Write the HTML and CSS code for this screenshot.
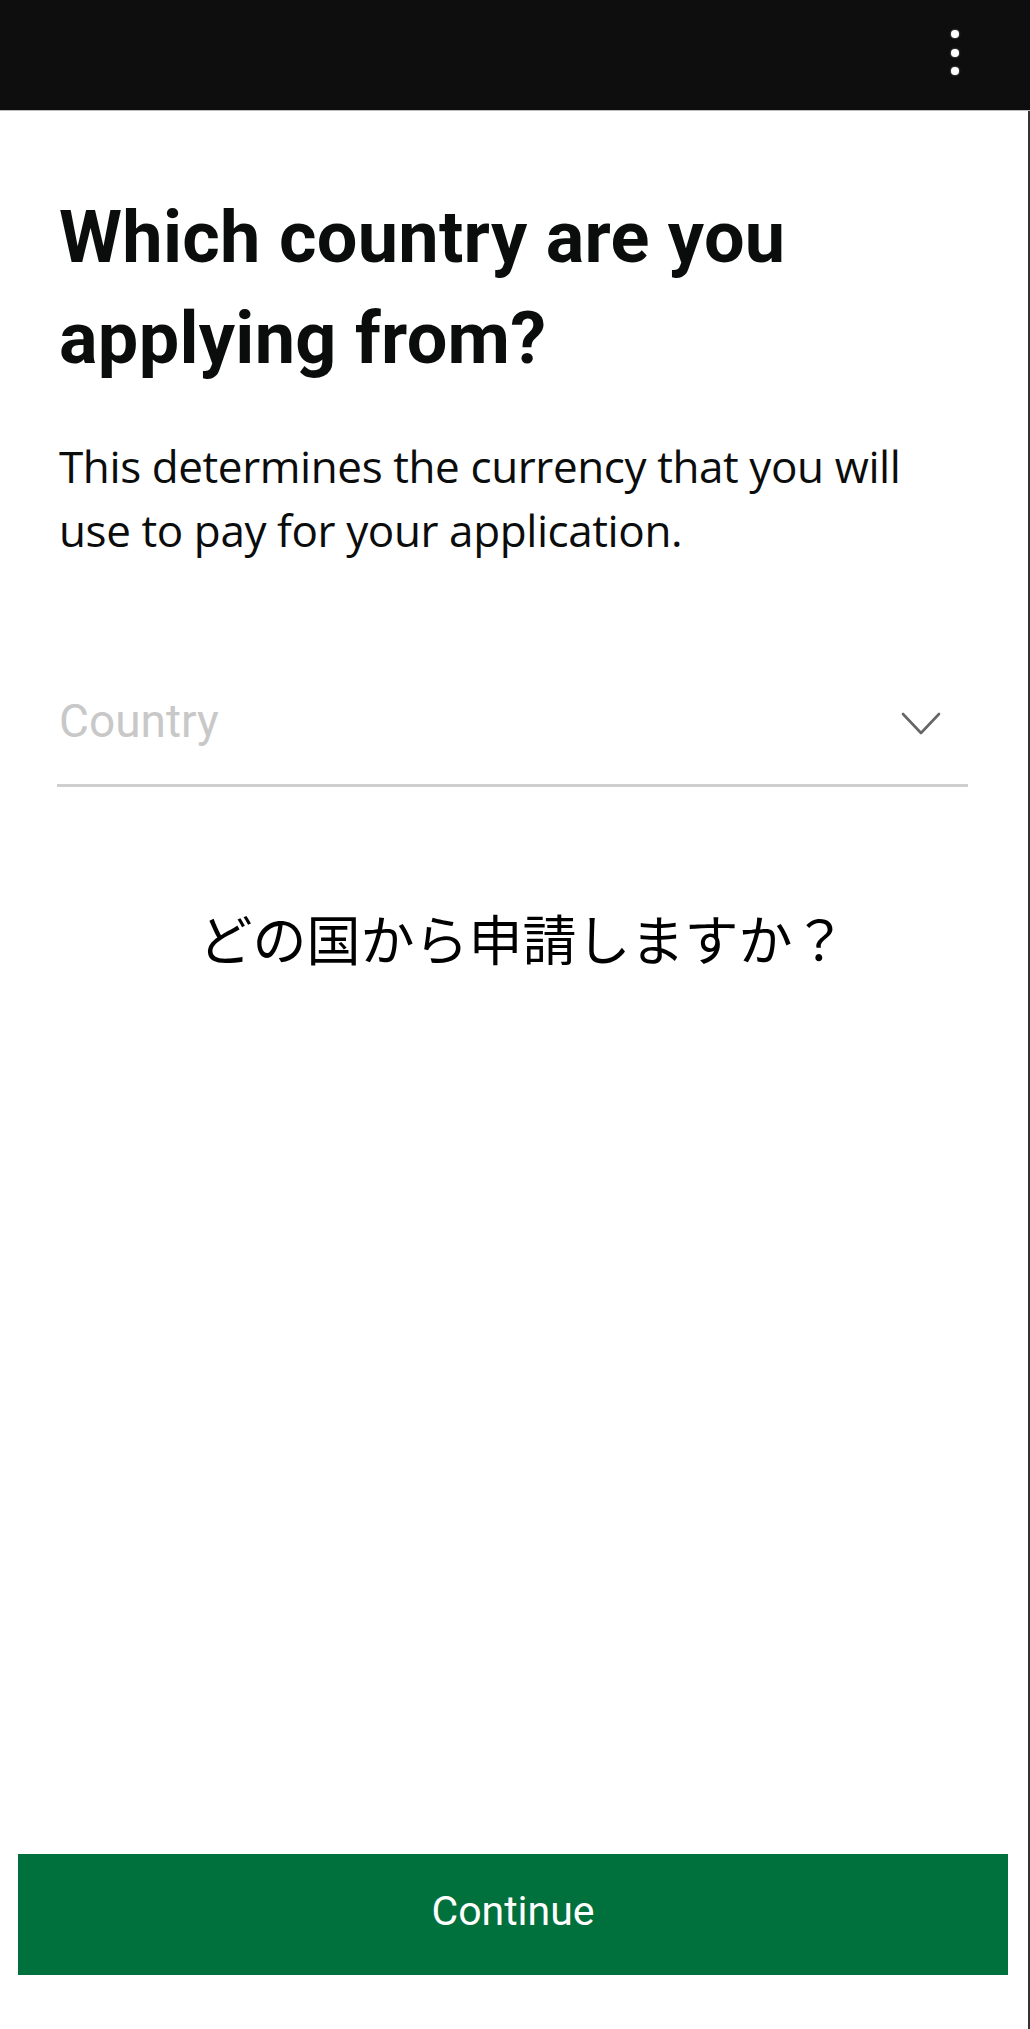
FILE: index.html
```html
<!DOCTYPE html>
<html lang="en">
<head>
    <meta charset="UTF-8">
    <meta name="viewport" content="width=device-width, initial-scale=1.0">
    <title>Which country are you applying from?</title>
    <link rel="stylesheet" href="styles.css">
</head>
<body>
    <header class="topbar">
        <button class="menu-btn" aria-label="More options">
            <span class="dot"></span>
            <span class="dot"></span>
            <span class="dot"></span>
        </button>
    </header>
    <div class="screen">
        <main class="content">
            <h1 class="title">Which country are you applying from?</h1>
            <p class="lead">This determines the currency that you will use to pay for your application.</p>
            <label class="country-field">
                <span class="placeholder">Country</span>
                <svg class="chevron" width="40" height="24" viewBox="0 0 40 24">
                    <path d="M2 2 L20 21 L38 2" fill="none" stroke="#666" stroke-width="2.6" stroke-linecap="round" stroke-linejoin="round"/>
                </svg>
            </label>
            <p class="translation">どの国から申請しますか？</p>
        </main>
        <div class="actions">
            <button class="continue-btn">Continue</button>
        </div>
    </div>
</body>
</html>
```

FILE: styles.css
```css
body {
    margin: 0;
    padding: 0;
    display: flex;
    flex-direction: column;
    min-height: 100vh;
    background-color: #fff;
    color: #0b0c0c;
}

.topbar {
    height: 110px;
    background-color: #0e0e0e;
    border-bottom: 1px solid #bdbdbd;
    display: flex;
    justify-content: flex-end;
    align-items: flex-start;
}

.menu-btn {
    margin: 30px 71px 0 0;
    padding: 0;
    border: none;
    background: none;
    display: flex;
    flex-direction: column;
    gap: 10.5px;
    cursor: pointer;
}

.dot {
    width: 8px;
    height: 8px;
    border-radius: 50%;
    background-color: #fff;
    box-shadow: 0 0 2px rgba(255, 255, 255, 0.6);
}

.screen {
    flex: 1;
    display: flex;
    flex-direction: column;
    border-right: 2px solid #333;
}

.content {
    padding: 76px 60px 0 59px;
}

.title {
    margin: 0;
    font-family: 'Roboto', sans-serif;
    font-size: 72px;
    font-weight: 700;
    line-height: 101px;
    letter-spacing: 0.3px;
}

.lead {
    margin: 45px 0 0;
    font-family: 'Open Sans', sans-serif;
    font-size: 44px;
    line-height: 64px;
    letter-spacing: -0.4px;
}

.country-field {
    margin: 132px 0 0 -2px;
    padding-bottom: 36px;
    border-bottom: 3px solid #cfcfcf;
    display: flex;
    justify-content: space-between;
    align-items: center;
}

.placeholder {
    font-family: 'Roboto', sans-serif;
    font-size: 46px;
    line-height: 54px;
    color: #c8c8c8;
    padding-left: 2px;
}

.chevron {
    margin: 6px 27px 0 0;
}

.translation {
    margin: 111px 0 0;
    padding-left: 18px;
    text-align: center;
    font-family: 'Noto Sans CJK JP', sans-serif;
    font-size: 54px;
    font-weight: 400;
    line-height: 80px;
    color: #000;
}

.actions {
    margin-top: auto;
    padding: 0 20px 54px 18px;
}

.continue-btn {
    display: block;
    width: 100%;
    height: 121px;
    padding: 0 0 8px;
    border: none;
    background-color: #00703c;
    color: #fff;
    font-family: 'Roboto', sans-serif;
    font-size: 41px;
    cursor: pointer;
}
```
